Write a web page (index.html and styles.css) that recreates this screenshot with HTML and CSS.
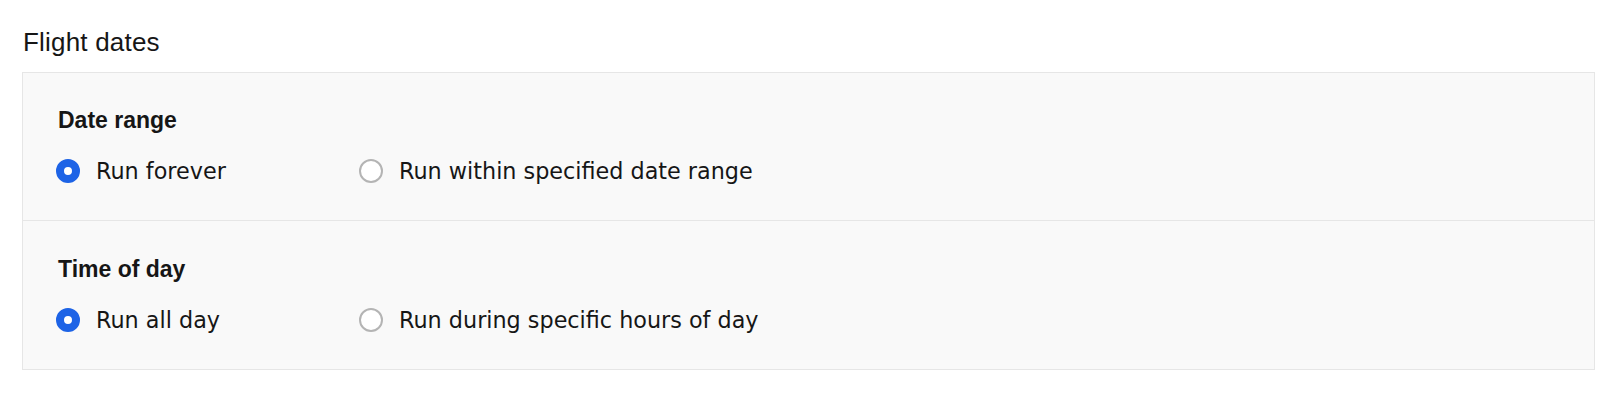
FILE: index.html
```html
<!DOCTYPE html>
<html lang="en">
<head>
    <meta charset="UTF-8">
    <meta name="viewport" content="width=device-width, initial-scale=1.0">
    <title>Flight dates</title>
    <link rel="stylesheet" href="styles.css">
</head>
<body>

    <h2 class="title">Flight dates</h2>

    <div class="panel">
        <!-- Date range -->
        <div class="section">
            <div class="section-label">Date range</div>
            <div class="options">
                <label class="option">
                    <input type="radio" name="range" checked>
                    <span>Run forever</span>
                </label>
                <label class="option">
                    <input type="radio" name="range">
                    <span>Run within specified date range</span>
                </label>
            </div>
        </div>

        <!-- Time of day -->
        <div class="section">
            <div class="section-label">Time of day</div>
            <div class="options">
                <label class="option">
                    <input type="radio" name="hours" checked>
                    <span>Run all day</span>
                </label>
                <label class="option">
                    <input type="radio" name="hours">
                    <span>Run during specific hours of day</span>
                </label>
            </div>
        </div>
    </div>

</body>
</html>
```

FILE: styles.css
```css
body {
    margin: 0;
    padding: 0;
    background: #fff;
    color: #161616;
    font-family: "Liberation Sans", Arial, sans-serif;
}
.title {
    margin: 0 0 15px 23px;
    padding-top: 27px;
    font-size: 26px;
    letter-spacing: 0.2px;
    line-height: 30px;
    font-weight: normal;
}
.panel {
    margin-left: 22px;
    width: 1571px;
    background: #f9f9f9;
    border: 1px solid #e6e6e6;
}
.section {
    padding: 33px 0 35px 33px;
}
.section + .section {
    border-top: 1px solid #e6e6e6;
    padding-top: 34px;
}
.section-label {
    font-size: 23px;
    line-height: 28px;
    font-weight: bold;
    margin: 0 0 23px 2px;
}
.options {
    display: flex;
}
.option {
    display: flex;
    align-items: center;
    gap: 16px;
    width: 303px;
    font-family: "DejaVu Sans", Verdana, sans-serif;
    font-size: 22.3px;
    line-height: 28px;
    white-space: nowrap;
    cursor: pointer;
}
.option input {
    appearance: none;
    -webkit-appearance: none;
    margin: 0;
    width: 24px;
    height: 24px;
    border-radius: 50%;
    border: 2px solid #b4b4b4;
    background: #fff;
    box-sizing: border-box;
    flex-shrink: 0;
    cursor: pointer;
}
.option input:checked {
    border: 8px solid #1d63e6;
    background: #fff;
}
```
